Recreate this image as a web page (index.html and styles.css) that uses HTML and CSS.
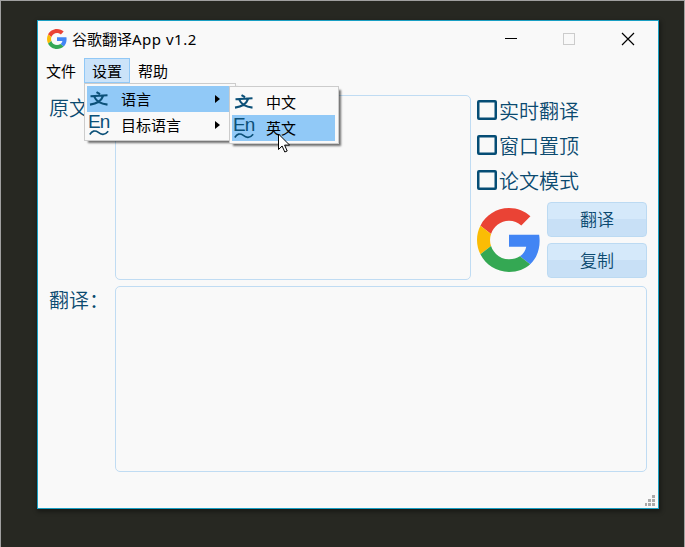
FILE: index.html
```html
<!DOCTYPE html>
<html lang="zh-CN">
<head>
<meta charset="utf-8">
<title>谷歌翻译App v1.2</title>
<link rel="stylesheet" href="styles.css">
</head>
<body>
<svg width="0" height="0" class="defs">
  <symbol id="google" viewBox="0 0 48 48">
    <path fill="#EA4335" d="M24 9.5c3.54 0 6.71 1.22 9.21 3.6l6.85-6.85C35.9 2.38 30.47 0 24 0 14.62 0 6.51 5.38 2.56 13.22l7.98 6.19C12.43 13.72 17.74 9.5 24 9.5z"/>
    <path fill="#4285F4" d="M46.98 24.55c0-1.57-.15-3.09-.38-4.55H24v9.02h12.94c-.58 2.96-2.26 5.48-4.78 7.18l7.73 6c4.51-4.18 7.09-10.36 7.09-17.65z"/>
    <path fill="#FBBC05" d="M10.53 28.59c-.48-1.45-.76-2.99-.76-4.59s.27-3.14.76-4.59l-7.98-6.19C.92 16.46 0 20.12 0 24c0 3.88.92 7.54 2.56 10.78l7.97-6.19z"/>
    <path fill="#34A853" d="M24 48c6.48 0 11.93-2.13 15.89-5.81l-7.73-6c-2.15 1.45-4.92 2.3-8.16 2.3-6.26 0-11.57-4.22-13.47-9.91l-7.98 6.19C6.51 42.62 14.62 48 24 48z"/>
  </symbol>
  <symbol id="wen" viewBox="0 0 20 16">
    <path fill="none" stroke="#0b5078" stroke-width="2.1" d="M7.500 1.200l3.500 2M1.500 5.200l17-.9M5.500 6c1.500 4 5 6.500 13 7.600M14 5.200C12.500 9.500 8.500 12.600 1 13.600"/>
  </symbol>
  <symbol id="wave" viewBox="0 0 20 7">
    <path fill="none" stroke="#0b5078" stroke-width="1.600" d="M.8 5.500C3 2 6 .8 9 3.200s6.500 3.800 10.200-.9"/>
  </symbol>
</svg>
<div class="desktop">
  <main class="window">
    <header class="titlebar">
      <svg class="app-icon"><use href="#google"/></svg>
      <span class="title">谷歌翻译<span class="latin">App v1.2</span></span>
      <svg class="controls" width="132" height="14" viewBox="0 0 132 14">
        <path d="M0 6.500h12" stroke="#000"/>
        <rect x="58.500" y="1.500" width="11" height="11" fill="none" stroke="#ccc"/>
        <path d="M117 1l12 12M129 1l-12 12" stroke="#000" stroke-width="1.200"/>
      </svg>
    </header>
    <nav class="menubar">
      <span class="menu">文件</span>
      <div class="menu open">设置
        <div class="popup main-popup">
          <div class="item active"><span class="icon"><svg class="wen"><use href="#wen"/></svg></span><span>语言</span><i class="arrow"></i></div>
          <div class="item"><span class="icon en"><b>En</b><svg class="wave"><use href="#wave"/></svg></span><span>目标语言</span><i class="arrow"></i></div>
        </div>
        <div class="popup sub-popup">
          <div class="item"><span class="icon"><svg class="wen"><use href="#wen"/></svg></span><span>中文</span></div>
          <div class="item active"><span class="icon en"><b>En</b><svg class="wave"><use href="#wave"/></svg></span><span>英文</span></div>
          <svg class="cursor" viewBox="0 0 12 20"><path fill="#fff" stroke="#000" d="M.5 1v15.500l3.600-3.500 2.700 6 2.400-1-2.600-5.900h5z"/></svg>
        </div>
      </div>
      <span class="menu">帮助</span>
    </nav>
    <section class="content">
      <label class="label">原文：</label>
      <div class="box"></div>
      <div class="side">
        <label class="check"><i></i><span>实时翻译</span></label>
        <label class="check"><i></i><span>窗口置顶</span></label>
        <label class="check"><i></i><span>论文模式</span></label>
        <div class="actions">
          <svg class="logo"><use href="#google"/></svg>
          <div class="buttons"><button>翻译</button><button>复制</button></div>
        </div>
      </div>
      <label class="label second">翻译：</label>
      <div class="box wide"></div>
    </section>
    <svg class="grip" viewBox="0 0 10 11" shape-rendering="crispEdges"><path fill="#aaa" d="M7 0h3v3H7zM3 4h3v3H3zM7 4h3v3H7zM0 8h2v3H0zM3 8h3v3H3zM7 8h3v3H7z"/></svg>
  </main>
</div>
</body>
</html>
```
FILE: styles.css
```css
* { box-sizing: border-box; }
body {
  margin: 0;
  font-family: "Noto Sans", "Noto Sans CJK SC", sans-serif;
  font-size: 15px;
  color: #000;
}
.defs { position: absolute; }
.desktop {
  width: 685px;
  height: 547px;
  padding: 19px 25px 0 36px;
  background: #272822;
  border: 1px solid #a0a0a0;
  border-bottom: 0;
  overflow: hidden;
}
.window {
  position: relative;
  width: 622px;
  height: 489px;
  background: #f9f9f9;
  border: 1px solid #189fc3;
  box-shadow: 1px 2px 4px 1px rgba(0, 0, 0, .35);
}
.titlebar {
  display: flex;
  align-items: center;
  height: 37px;
  padding: 0 21px 1px 9px;
}
.app-icon { width: 20px; height: 20px; margin-right: 5px; }
.title { line-height: 20px; }
.latin { letter-spacing: .5px; }
.controls { margin-left: auto; }
.menubar { display: flex; height: 26px; }
.menu {
  position: relative;
  width: 46px;
  height: 25px;
  line-height: 25px;
  text-align: center;
  border: 1px solid transparent;
}
.menu.open { background: #cbe3f9; border-color: #91c8f6; }
.popup {
  position: absolute;
  z-index: 2;
  padding: 2px;
  background: #f9f9f9;
  border: 1px solid #ccc;
  box-shadow: 3px 3px 2px -1px rgba(0, 0, 0, .55);
}
.main-popup { left: -1px; top: 24px; width: 152px; height: 58px; }
.sub-popup { left: 144px; top: 27px; width: 110px; height: 58px; z-index: 3; padding-right: 3px; }
.item {
  display: flex;
  align-items: center;
  height: 26px;
  line-height: 26px;
  text-align: left;
}
.item.active { background: #91c9f7; }
.icon { width: 34px; height: 26px; padding-left: 2px; display: flex; align-items: center; flex: none; }
.wen { width: 20px; height: 16px; }
.en { flex-direction: column; align-items: flex-start; padding-left: 0; }
.en b {
  height: 17px;
  font: 19px/19px "Liberation Sans", sans-serif;
  letter-spacing: -.8px;
  margin-left: 1px;
  color: #0b5078;
}
.wave { width: 20px; height: 7px; margin-left: 2px; }
.arrow {
  margin-left: auto;
  margin-right: 13px;
  border: 4px solid transparent;
  border-left: 5px solid #000;
  border-right: 0;
}
.cursor { position: absolute; left: 48px; top: 46px; width: 12px; height: 20px; }
.content {
  display: grid;
  grid-template-columns: 66px 356px 176px;
  grid-template-rows: 185px 186px;
  row-gap: 6px;
  padding: 11px 11px 0;
}
.label { font-size: 20px; font-weight: 350; line-height: 28px; color: #0b4a70; white-space: nowrap; }
.second { padding-top: 1px; }
.box { border: 1px solid #c0dcf3; border-radius: 5px; }
.wide { grid-column: 2 / 4; }
.side { padding: 0 0 0 6px; }
.check {
  display: flex;
  align-items: center;
  gap: 2px;
  height: 35px;
  font-size: 20px;
  font-weight: 350;
  line-height: 30px;
  color: #0b4a70;
}
.check:first-child { margin-top: -3px; }
.check span { padding-top: 4px; }
.check i { width: 20px; height: 20px; border: 2.500px solid #054d75; border-radius: 2px; box-shadow: inset 0 0 0 .5px #054d75; }
.actions { display: flex; justify-content: space-between; align-items: center; margin-top: 5px; }
.logo { width: 64px; height: 64px; }
.buttons { display: flex; flex-direction: column; gap: 6px; }
button {
  width: 100px;
  height: 35px;
  padding: 0 0 2px;
  border: 1px solid #bcdaf2;
  border-radius: 4px;
  background: linear-gradient(#d5e9fa 0 49%, #c8e0f6 50%);
  font: 350 17px "Noto Sans CJK SC", sans-serif;
  color: #0b4a70;
}
.grip { position: absolute; right: 3px; bottom: 2px; width: 10px; height: 11px; }
```
